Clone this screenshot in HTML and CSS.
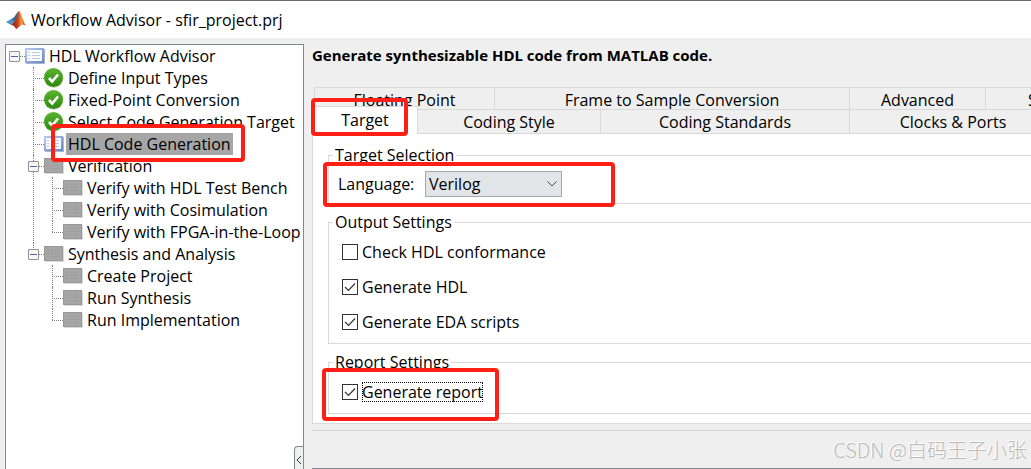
FILE: index.html
```html
<!DOCTYPE html>
<html lang="en">
<head>
<meta charset="utf-8">
<title>Workflow Advisor - sfir_project.prj</title>
<link rel="stylesheet" href="styles.css">
</head>
<body>
<svg class="defs" aria-hidden="true">
  <defs>
    <linearGradient id="paper" x1="0" y1="0" x2="1" y2="1"><stop offset="0" stop-color="#b9cdf2"/><stop offset="1" stop-color="#6484c4"/></linearGradient>
    <linearGradient id="green" x1="0" y1="0" x2="0" y2="1"><stop offset="0" stop-color="#5cb431"/><stop offset="1" stop-color="#2c8a0c"/></linearGradient>
    <linearGradient id="flame" x1="0" y1="0" x2="1" y2="0"><stop offset="0" stop-color="#7a1d12"/><stop offset=".45" stop-color="#c8401c"/><stop offset=".7" stop-color="#f0a040"/><stop offset="1" stop-color="#c23c18"/></linearGradient>
  </defs>
  <symbol id="i-list" viewBox="0 0 20 16">
    <rect x="1" y="1" width="19" height="15" fill="#a9b3cb"/>
    <rect width="19" height="15" fill="url(#paper)"/>
    <rect x="2" y="2" width="15" height="11" fill="#f7faff"/>
    <path d="M3 4.500h2M3 7.500h2M3 10.500h2M7 4.500h8M7 7.500h8M7 10.500h8" stroke="#c3c8d2"/>
  </symbol>
  <symbol id="i-idle" viewBox="0 0 20 16">
    <rect x="1" y="1" width="19" height="15" fill="#dcdcdc"/>
    <rect width="19" height="15" fill="#989898"/>
    <rect x="1" y="1" width="17" height="13" fill="#a6a6a6"/>
    <path d="M3 4.500h2M3 7.500h2M3 10.500h2M7 4.500h8M7 7.500h8M7 10.500h8" stroke="#9d9d9d"/>
  </symbol>
  <symbol id="i-done" viewBox="0 0 20 20">
    <circle cx="10" cy="10.500" r="9.500" fill="#cfd8ca"/>
    <circle cx="9.500" cy="9.500" r="9.500" fill="url(#green)"/>
    <path d="M5 10l3.200 3.500L14 6.500" fill="none" stroke="#fff" stroke-width="2.600"/>
  </symbol>
</svg>

<header class="titlebar">
  <svg class="logo" viewBox="0 0 20 20" aria-hidden="true">
    <path d="M0 12l6-3.500L9 11l-4 4z" fill="#4f94c4"/>
    <path d="M6 8.500C9 8 10 3 13 1l-1 7-4 4z" fill="#2f6696"/>
    <path d="M5 15l4-4c2-2 2.500-9 4-10 2 1 4 10 7 15-3-2-5-1-6 0-1.500 1.500-3 3-4 3-1-2-2.500-4-5-4z" fill="url(#flame)"/>
  </svg>
  <h1>Workflow Advisor - sfir_project.prj</h1>
</header>

<div class="workspace">
  <nav class="sidebar" aria-label="Workflow steps">
    <ul class="tree">
      <li><div class="row"><button class="toggle" aria-label="Collapse HDL Workflow Advisor"></button><svg class="icon"><use href="#i-list"/></svg><span>HDL Workflow Advisor</span></div>
        <ul>
          <li><div class="row"><svg class="icon done"><use href="#i-done"/></svg><span>Define Input Types</span></div></li>
          <li><div class="row"><svg class="icon done"><use href="#i-done"/></svg><span>Fixed-Point Conversion</span></div></li>
          <li><div class="row"><svg class="icon done"><use href="#i-done"/></svg><span>Select Code Generation Target</span></div></li>
          <li><div class="row"><svg class="icon"><use href="#i-list"/></svg><span class="selected">HDL Code Generation</span><i class="mark mark-step"></i></div></li>
          <li><div class="row"><button class="toggle" aria-label="Collapse Verification"></button><svg class="icon"><use href="#i-idle"/></svg><span>Verification</span></div>
            <ul>
              <li><div class="row"><svg class="icon"><use href="#i-idle"/></svg><span>Verify with HDL Test Bench</span></div></li>
              <li><div class="row"><svg class="icon"><use href="#i-idle"/></svg><span>Verify with Cosimulation</span></div></li>
              <li><div class="row"><svg class="icon"><use href="#i-idle"/></svg><span>Verify with FPGA-in-the-Loop</span></div></li>
            </ul>
          </li>
          <li><div class="row"><button class="toggle" aria-label="Collapse Synthesis and Analysis"></button><svg class="icon"><use href="#i-idle"/></svg><span>Synthesis and Analysis</span></div>
            <ul>
              <li><div class="row"><svg class="icon"><use href="#i-idle"/></svg><span>Create Project</span></div></li>
              <li><div class="row"><svg class="icon"><use href="#i-idle"/></svg><span>Run Synthesis</span></div></li>
              <li><div class="row"><svg class="icon"><use href="#i-idle"/></svg><span>Run Implementation</span></div></li>
            </ul>
          </li>
        </ul>
      </li>
    </ul>
    <button class="collapse" aria-label="Hide steps"><svg viewBox="0 0 6 10"><path d="M5 1L1 5l4 4" fill="none" stroke="#333"/></svg></button>
  </nav>

  <main class="content">
    <h2>Generate synthesizable HDL code from MATLAB code.</h2>
    <div class="tabs">
      <div class="tab-row back">
        <button class="tab w180">Floating Point</button>
        <button class="tab w355">Frame to Sample Conversion</button>
        <button class="tab w136">Advanced</button>
        <button class="tab cut">S</button>
      </div>
      <div class="tab-row front">
        <button class="tab active">Target<i class="mark mark-tab"></i></button>
        <button class="tab w182">Coding Style</button>
        <button class="tab w249">Coding Standards</button>
        <button class="tab w207">Clocks &amp; Ports</button>
      </div>
    </div>
    <form class="panel">
      <fieldset class="target">
        <legend>Target Selection</legend>
        <div class="field">
          <label for="language">Language:</label>
          <select id="language"><option>Verilog</option><option>VHDL</option></select>
        </div>
        <i class="mark mark-language"></i>
      </fieldset>
      <fieldset>
        <legend>Output Settings</legend>
        <label class="check"><input type="checkbox"><span>Check HDL conformance</span></label>
        <label class="check"><input type="checkbox" checked><span>Generate HDL</span></label>
        <label class="check"><input type="checkbox" checked><span>Generate EDA scripts</span></label>
      </fieldset>
      <fieldset>
        <legend>Report Settings</legend>
        <label class="check focused"><input type="checkbox" checked><span>Generate report</span></label>
        <i class="mark mark-report"></i>
      </fieldset>
    </form>
    <footer class="footer"><span class="credit">CSDN @白码王子小张</span></footer>
  </main>
</div>
</body>
</html>
```
FILE: styles.css
```css
* { box-sizing: border-box; }

body {
  margin: 0;
  height: 100vh;
  display: flex;
  flex-direction: column;
  overflow: hidden;
  background: #efefef;
  color: #000;
  font: 16px/22px "Open Sans", "Noto Sans", sans-serif;
}

button, select, input { font: inherit; color: inherit; margin: 0; }
h1, h2 { margin: 0; font-size: inherit; }
.defs { position: absolute; width: 0; height: 0; }

.titlebar {
  display: flex;
  align-items: center;
  gap: 5px;
  height: 38px;
  padding: 0 6px;
  background: #fff;
  border-top: 1px solid #6c6a6c;
}
.titlebar h1 { font-weight: 400; }
.logo { width: 20px; height: 20px; }

.workspace {
  flex: 1;
  display: flex;
  gap: 8px;
  padding: 6px 0 0 5px;
  min-height: 0;
}

/* Step tree */
.sidebar {
  position: relative;
  flex: 0 0 299px;
  background: #fff;
  border: 1px solid #828790;
  border-bottom: 0;
}
.tree, .tree ul { margin: 0; padding: 0; list-style: none; }
.tree ul { padding-left: 19px; }
.tree li { position: relative; }
.tree ul > li::before {
  content: "";
  position: absolute;
  left: 8px;
  top: 0;
  bottom: 0;
  border-left: 1px dotted #808080;
}
.tree ul > li:last-child::before { bottom: auto; height: 11px; }
.row {
  position: relative;
  display: flex;
  align-items: center;
  height: 22px;
  padding-left: 19px;
  white-space: nowrap;
}
.row::before {
  content: "";
  position: absolute;
  left: 8px;
  top: 11px;
  width: 11px;
  border-top: 1px dotted #808080;
}
.icon { flex: none; width: 20px; height: 16px; margin-right: 2px; }
.icon.done { height: 20px; }
.row span { padding: 0 2px; }
.row .selected { background: #a6a6a6; }
.toggle {
  position: absolute;
  left: 3px;
  top: 6px;
  width: 11px;
  height: 11px;
  padding: 0;
  border: 1px solid #919191;
  border-radius: 1px;
  background: linear-gradient(#4b63a7, #4b63a7) center / 7px 1px no-repeat #f7f7f7;
}
.collapse {
  position: absolute;
  right: 0;
  bottom: 0;
  width: 9px;
  height: 23px;
  padding: 4px 0 0 1px;
  border: 1px solid #828790;
  border-width: 1px 0 0 1px;
  border-radius: 4px 0 0 0;
  background: #efefef;
}
.collapse svg { display: block; width: 6px; height: 10px; }

/* Settings area */
.content {
  flex: 1;
  min-width: 0;
  display: flex;
  flex-direction: column;
}
.content h2 { font-size: 15px; font-weight: 700; }
.tabs { padding: 21px 0 0 2px; }
.tab-row { display: flex; }
.tab {
  flex: none;
  padding: 0;
  border: solid #d9d9d9;
  border-width: 1px 0 0 1px;
  background: #efefef;
  white-space: nowrap;
}
.back .tab { height: 22px; padding-top: 2px; line-height: 20px; }
.front .tab { height: 24px; padding-top: 1px; }
.w136 { width: 136px; }
.w180 { width: 180px; }
.w182 { width: 182px; }
.w207 { width: 207px; }
.w249 { width: 249px; }
.w355 { width: 355px; }
.back .cut { width: 96px; padding-left: 42px; text-align: left; }
.front { align-items: flex-end; }
.front .active {
  position: relative;
  z-index: 1;
  width: 106px;
  height: 28px;
  margin: -3px 0 -1px -2px;
  padding-bottom: 2px;
  border-width: 1px 1px 0;
  background: #fff;
}
.front .active + .tab { border-left: 0; }

.panel {
  display: flex;
  flex-direction: column;
  gap: 8px;
  padding: 11px 0 9px 15px;
  background: #fff;
  border: 1px solid #d9d9d9;
  border-right: 0;
}
fieldset {
  position: relative;
  min-width: 0;
  margin: 0;
  padding: 1px 9px 4px 13px;
  border: 1px solid #d9d9d9;
  border-right: 0;
}
legend { margin-left: -9px; padding: 0 2px; line-height: 21px; }
.target { padding: 5px 9px 6px; }
.target legend { margin-left: -5px; }
.field { display: flex; align-items: center; }
.field label { width: 87px; }
select {
  appearance: none;
  width: 137px;
  height: 26px;
  padding: 0 24px 0 3px;
  border: 1px solid #a5a9ad;
  border-radius: 0;
  background: #e1e5e8 url("data:image/svg+xml,%3Csvg xmlns='http://www.w3.org/2000/svg' width='10' height='6'%3E%3Cpath d='M.5 .5L5 5 9.5 .5' fill='none' stroke='%23444'/%3E%3C/svg%3E") right 4px center no-repeat;
}
.check { display: flex; align-items: center; gap: 4px; height: 35px; }
.check input {
  appearance: none;
  width: 16px;
  height: 16px;
  border: 1px solid #333;
  background: #fff;
}
.check input:checked {
  background: #fff url("data:image/svg+xml,%3Csvg xmlns='http://www.w3.org/2000/svg' width='12' height='10'%3E%3Cpath d='M1 5l3.5 3.500L11 1.500' fill='none' stroke='%23333' stroke-width='1.200'/%3E%3C/svg%3E") center no-repeat;
}
.focused span { outline: 1px dotted #000; outline-offset: -1px; line-height: 20px; }

.footer {
  flex: 1;
  display: flex;
  justify-content: flex-end;
  margin-top: 6px;
  padding: 8px 4px 0;
  border-top: 1px solid #d0d0d0;
  border-bottom: 1px solid #828790;
}
.credit {
  font: 300 20px/22px "Noto Sans CJK SC", sans-serif;
  color: #bababa;
  text-shadow: -1px -1px 0 #fff;
}

/* Red highlight frames */
.mark {
  position: absolute;
  z-index: 2;
  border: 4px solid #ff2015;
  border-radius: 4px;
  pointer-events: none;
}
.mark-step { left: 26px; top: -9px; width: 194px; height: 38px; }
.mark-tab { left: -2px; top: -9px; width: 97px; height: 38px; }
.mark-language { left: -6px; top: -4px; width: 292px; height: 45px; }
.mark-report { left: -7px; top: -5px; width: 177px; height: 53px; }
```
